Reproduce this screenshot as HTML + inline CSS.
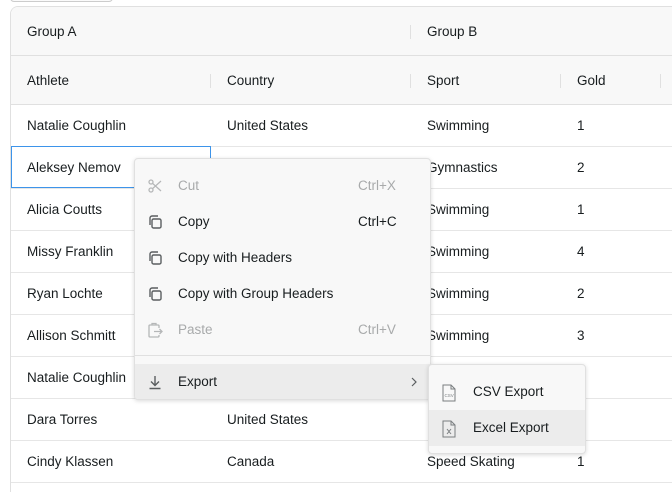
<!DOCTYPE html>
<html style="overflow:hidden;height:492px"><head><meta charset="utf-8"><style>
*{box-sizing:border-box;margin:0;padding:0}
body{width:672px;height:492px;overflow:hidden;background:#fff;font-family:"Liberation Sans",sans-serif;font-size:13.5px;color:#181d1f;position:relative}
.a{position:absolute}
.grid{left:10px;top:6px;width:700px;height:486px;border:1px solid #e0e0e0;border-bottom:none;border-radius:8px 8px 0 0;overflow:hidden}
.hdr{left:0;top:0;width:100%;height:98px;background:#f8f8f8;border-bottom:1px solid #e0e0e0}
.hl{left:0;top:48px;width:100%;height:1px;background:#e0e0e0}
.t{position:absolute;white-space:nowrap;line-height:16px}
.sep{position:absolute;width:1px;height:14px;background:#e0e0e0}
.rl{position:absolute;left:0;width:100%;height:1px;background:#e6e6e6}
.menu{left:134px;top:158px;width:297px;height:242px;background:#f8f8f8;border:1px solid #e0e0e0;border-radius:4px;box-shadow:0 1px 4px rgba(0,0,0,.15);overflow:hidden}
.mi{position:absolute;left:0;width:100%;height:36px;font-size:13.5px;color:#181d1f}
.mi .t{top:10px}
.dis{color:#a8aaab}
.ic{position:absolute;left:12px;top:10px}
.sub{left:428px;top:364px;width:158px;height:90px;background:#f8f8f8;border:1px solid #e0e0e0;border-radius:4px;box-shadow:0 1px 4px rgba(0,0,0,.15);overflow:hidden}
</style></head><body>
<div class="a" style="left:10px;top:-6px;width:103px;height:8px;border:1px solid #ccc;border-radius:4px;background:#fafafa"></div>
<div class="a grid">
 <div class="a hdr"></div>
 <div class="a hl"></div>
 <div class="t" style="left:16px;top:17px">Group A</div>
 <div class="sep" style="left:399px;top:18px"></div>
 <div class="t" style="left:416px;top:17px">Group B</div>
 <div class="t" style="left:16px;top:66px">Athlete</div>
 <div class="sep" style="left:199px;top:67px"></div>
 <div class="t" style="left:216px;top:66px">Country</div>
 <div class="sep" style="left:399px;top:67px"></div>
 <div class="t" style="left:416px;top:66px">Sport</div>
 <div class="sep" style="left:549px;top:67px"></div>
 <div class="t" style="left:566px;top:66px">Gold</div>
 <div class="sep" style="left:649px;top:67px"></div>

 <div class="rl" style="top:139px"></div><div class="rl" style="top:181px"></div><div class="rl" style="top:223px"></div><div class="rl" style="top:265px"></div><div class="rl" style="top:307px"></div><div class="rl" style="top:349px"></div><div class="rl" style="top:391px"></div><div class="rl" style="top:433px"></div><div class="rl" style="top:475px"></div>

 <div class="t" style="left:16px;top:111px">Natalie Coughlin</div><div class="t" style="left:216px;top:111px">United States</div><div class="t" style="left:416px;top:111px">Swimming</div><div class="t" style="left:566px;top:111px">1</div>
 <div class="a" style="left:0;top:139px;width:200px;height:42px;border:1px solid #3d94ea"></div>
 <div class="t" style="left:16px;top:153px">Aleksey Nemov</div><div class="t" style="left:416px;top:153px">Gymnastics</div><div class="t" style="left:566px;top:153px">2</div>
 <div class="t" style="left:16px;top:195px">Alicia Coutts</div><div class="t" style="left:416px;top:195px">Swimming</div><div class="t" style="left:566px;top:195px">1</div>
 <div class="t" style="left:16px;top:237px">Missy Franklin</div><div class="t" style="left:416px;top:237px">Swimming</div><div class="t" style="left:566px;top:237px">4</div>
 <div class="t" style="left:16px;top:279px">Ryan Lochte</div><div class="t" style="left:416px;top:279px">Swimming</div><div class="t" style="left:566px;top:279px">2</div>
 <div class="t" style="left:16px;top:321px">Allison Schmitt</div><div class="t" style="left:416px;top:321px">Swimming</div><div class="t" style="left:566px;top:321px">3</div>
 <div class="t" style="left:16px;top:363px">Natalie Coughlin</div>
 <div class="t" style="left:16px;top:405px">Dara Torres</div><div class="t" style="left:216px;top:405px">United States</div>
 <div class="t" style="left:16px;top:447px">Cindy Klassen</div><div class="t" style="left:216px;top:447px">Canada</div><div class="t" style="left:416px;top:447px">Speed Skating</div><div class="t" style="left:566px;top:447px">1</div>
</div>

<div class="a menu">
 <div class="mi dis" style="top:9px">
  <svg class="ic" width="16" height="16" viewBox="0 0 16 16" fill="none" stroke="#b5b7b8" stroke-width="1.3"><circle cx="4" cy="4" r="2"/><circle cx="4" cy="12" r="2"/><path d="M5.5 5.3L14 13M5.5 10.7L14 3"/></svg>
  <div class="t" style="left:43px">Cut</div><div class="t" style="left:223px">Ctrl+X</div></div>
 <div class="mi" style="top:45px">
  <svg class="ic" width="16" height="16" viewBox="0 0 16 16" fill="none" stroke="#5a5e60" stroke-width="1.4"><rect x="5" y="5" width="9" height="9" rx="1.5"/><path d="M3 11V4a2 2 0 0 1 2-2h6"/></svg>
  <div class="t" style="left:43px">Copy</div><div class="t" style="left:223px">Ctrl+C</div></div>
 <div class="mi" style="top:81px">
  <svg class="ic" width="16" height="16" viewBox="0 0 16 16" fill="none" stroke="#5a5e60" stroke-width="1.4"><rect x="5" y="5" width="9" height="9" rx="1.5"/><path d="M3 11V4a2 2 0 0 1 2-2h6"/></svg>
  <div class="t" style="left:43px">Copy with Headers</div></div>
 <div class="mi" style="top:117px">
  <svg class="ic" width="16" height="16" viewBox="0 0 16 16" fill="none" stroke="#5a5e60" stroke-width="1.4"><rect x="5" y="5" width="9" height="9" rx="1.5"/><path d="M3 11V4a2 2 0 0 1 2-2h6"/></svg>
  <div class="t" style="left:43px">Copy with Group Headers</div></div>
 <div class="mi dis" style="top:153px">
  <svg class="ic" width="16" height="16" viewBox="0 0 16 16" fill="none" stroke="#b5b7b8" stroke-width="1.3"><path d="M12 6V4a1 1 0 0 0-1-1H3a1 1 0 0 0-1 1v10a1 1 0 0 0 1 1h8a1 1 0 0 0 1-1v-1M5 3V1.5h4V3M7 9.5h8M12.5 7l2.5 2.5-2.5 2.5"/></svg>
  <div class="t" style="left:43px">Paste</div><div class="t" style="left:223px">Ctrl+V</div></div>
 <div class="a" style="left:0;top:196px;width:100%;height:1px;background:#e0e0e0"></div>
 <div class="mi" style="top:205px;background:#ececec">
  <svg class="ic" width="16" height="16" viewBox="0 0 16 16" fill="none" stroke="#5a5e60" stroke-width="1.4"><path d="M8 2v9M4 7.5l4 4 4-4M2.5 14.5h11"/></svg>
  <div class="t" style="left:43px">Export</div>
  <svg style="position:absolute;left:275px;top:13px" width="8" height="10" viewBox="0 0 8 10" fill="none" stroke="#5a5e60" stroke-width="1.2"><path d="M2 1l4 4-4 4"/></svg></div>
</div>

<div class="a sub">
 <div class="mi" style="top:9px">
  <svg class="ic" width="16" height="18" viewBox="0 0 16 18" fill="none" stroke="#7a7e80" stroke-width="1"><path d="M2 1h8l4 4v12H2zM10 1v4h4"/><text x="3.5" y="13" font-size="4.5" fill="#7a7e80" stroke="none" font-family="Liberation Sans">CSV</text></svg>
  <div class="t" style="left:44px">CSV Export</div></div>
 <div class="mi" style="top:45px;background:#ececec">
  <svg class="ic" width="16" height="18" viewBox="0 0 16 18" fill="none" stroke="#7a7e80" stroke-width="1"><path d="M2 1h8l4 4v12H2zM10 1v4h4M6 9l4 5M10 9l-4 5"/></svg>
  <div class="t" style="left:44px">Excel Export</div></div>
</div>
</body></html>
